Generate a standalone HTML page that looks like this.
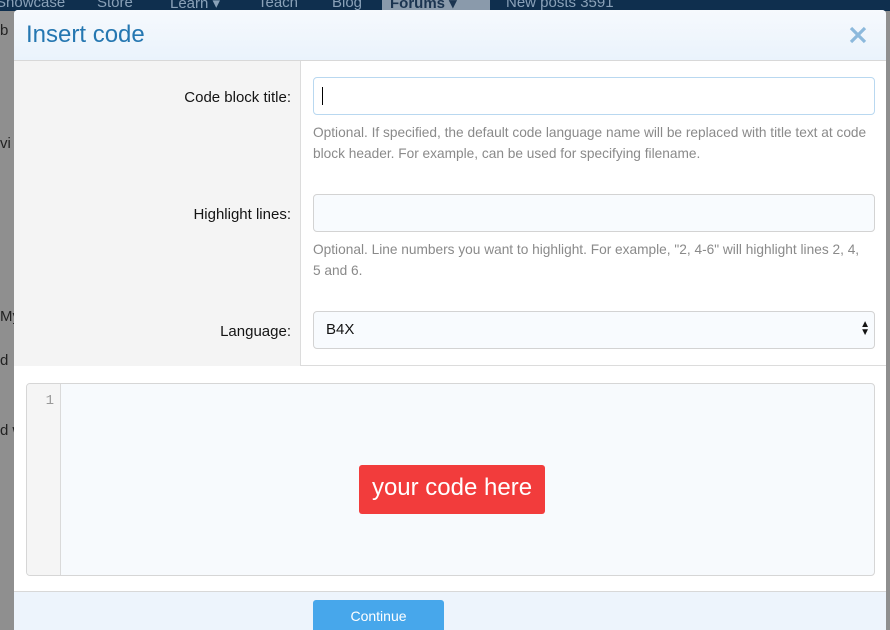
<!DOCTYPE html>
<html><head><meta charset="utf-8"><style>
*{box-sizing:border-box;margin:0;padding:0}
body{width:890px;height:624px;overflow:hidden;position:relative;background:#8f8f8f;font-family:"Liberation Sans",sans-serif}
.nav{position:absolute;left:0;top:0;width:890px;height:11px;background:#0f2f4e;color:#8aa1b8;font-size:15px;overflow:hidden}
.nav span{position:absolute;top:-6px}
.bgtxt{position:absolute;color:#222;font-size:15px;left:0}
.dlg{position:absolute;left:14px;top:10px;width:872px;height:620px;background:#fff;border-radius:4px 4px 0 0;overflow:hidden}
.hdr{height:51px;background:linear-gradient(#f6f9fd,#eaf3fc);border-bottom:1px solid #d8d8d8;position:relative}
.hdr h1{position:absolute;left:12px;top:11px;font-weight:normal;font-size:24px;color:#2577b1}
.x{position:absolute;left:834px;top:14px;width:20px;height:22px}
.form{position:relative;height:305px;border-bottom:1px solid #dcdcdc}
.lc{position:absolute;left:0;top:0;width:287px;height:305px;background:#f4f4f4;border-right:1px solid #dcdcdc}
.lbl{position:absolute;right:595px;font-size:15px;color:#141414;text-align:right;white-space:nowrap}
.inp{position:absolute;left:299px;width:562px;height:38px;border:1px solid #d3d3d3;border-radius:4px;background:#f8fbfe}
.hint{position:absolute;left:299px;width:557px;font-size:13.7px;color:#8a8a8a;line-height:21px}
.code{position:absolute;left:12px;top:373px;width:849px;height:193px;border:1px solid #d6d6d6;border-radius:4px;background:#f7fafd;overflow:hidden}
.gut{position:absolute;left:0;top:0;width:34px;height:100%;background:#f5f5f5;border-right:1px solid #dadada;color:#999;font-family:"Liberation Mono",monospace;font-size:14px;text-align:right;padding:9px 6px 0 0}
.red{position:absolute;left:332px;top:81px;width:186px;height:49px;background:#f23c3c;border-radius:3px;color:#fff;font-size:24px;text-align:center;line-height:46px}
.ftr{position:absolute;left:0;top:581px;width:872px;height:40px;background:#edf4fc;border-top:1px solid #d8d8d8}
.btn{position:absolute;left:299px;top:8px;width:131px;height:40px;background:#47a7eb;border-radius:3px;color:#fff;font-size:14px;text-align:center;padding-top:8px}
</style></head><body>
<div class="nav"><span style="left:-4px">Showcase</span><span style="left:97px">Store</span><span style="left:170px">Learn ▾</span><span style="left:258px">Teach</span><span style="left:332px">Blog</span><span style="left:382px;background:#8a9aab;color:#1b3450;padding:0 8px;font-weight:bold;width:108px">Forums ▾</span><span style="left:506px">New posts 3591</span></div>
<div class="bgtxt" style="top:22px">b</div>
<div class="bgtxt" style="top:135px">vi</div>
<div class="bgtxt" style="top:308px">My</div>
<div class="bgtxt" style="top:352px">d</div>
<div class="bgtxt" style="top:422px">d w</div>
<div class="dlg">
<div class="hdr"><h1>Insert code</h1>
<svg class="x" viewBox="0 0 20 22"><path d="M3 4L17 18M17 4L3 18" stroke="#8cb9dc" stroke-width="3.2"/></svg></div>
<div class="form">
<div class="lc"></div>
<div class="lbl" style="top:28px">Code block title:</div>
<div class="inp" style="top:16px;background:#fff;border-color:#b9d8f0"><div style="position:absolute;left:8px;top:9px;width:1px;height:18px;background:#000"></div></div>
<div class="hint" style="top:61px">Optional. If specified, the default code language name will be replaced with title text at code block header. For example, can be used for specifying filename.</div>
<div class="lbl" style="top:145px">Highlight lines:</div>
<div class="inp" style="top:133px"></div>
<div class="hint" style="top:178px">Optional. Line numbers you want to highlight. For example, "2, 4-6" will highlight lines 2, 4, 5 and 6.</div>
<div class="lbl" style="top:262px">Language:</div>
<div class="inp" style="top:250px;font-size:15px;color:#141414;padding:9px 0 0 12px">B4X<span style="position:absolute;right:4px;top:9px;font-size:10px;line-height:8px">▲<br>▼</span></div>
</div>
<div class="code"><div class="gut">1</div><div class="red">your code here</div></div>
<div class="ftr"><div class="btn">Continue</div></div>
</div>
</body></html>
